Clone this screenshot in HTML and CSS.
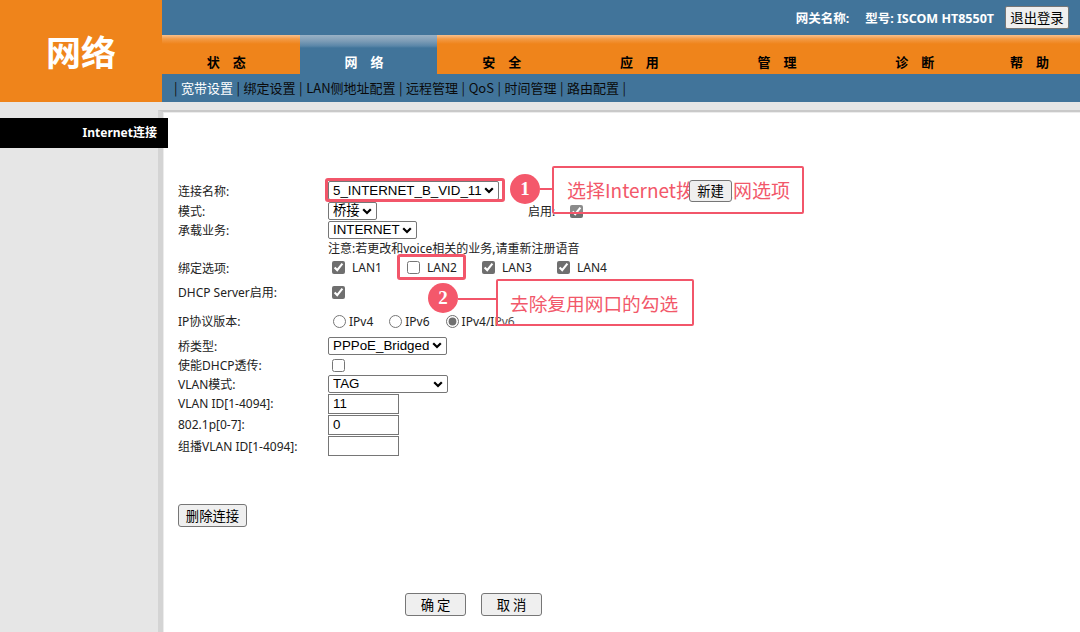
FILE: index.html
```html
<!DOCTYPE html>
<html lang="zh-CN">
<head>
<meta charset="utf-8">
<title>网络</title>
<link rel="stylesheet" href="styles.css">
</head>
<body>
<div class="header">
  <div class="logo">网络</div>
  <div class="head-main">
    <div class="topbar">
      <span class="gw">网关名称:</span>
      <span class="model">型号: ISCOM HT8550T</span>
      <button class="btn logout">退出登录</button>
    </div>
    <div class="tabs">
      <div class="tab">状 态</div>
      <div class="tab active">网 络</div>
      <div class="tab">安 全</div>
      <div class="tab">应 用</div>
      <div class="tab">管 理</div>
      <div class="tab">诊 断</div>
      <div class="tab last">帮 助</div>
    </div>
    <div class="subnav">
      <span class="sep">|</span> <span class="cur">宽带设置</span> <span class="sep">|</span> 绑定设置 <span class="sep">|</span> LAN侧地址配置 <span class="sep">|</span> 远程管理 <span class="sep">|</span> QoS <span class="sep">|</span> 时间管理 <span class="sep">|</span> 路由配置 <span class="sep">|</span>
    </div>
  </div>
</div>

<div class="main">
  <div class="sidebar">
    <div class="side-item">Internet连接</div>
  </div>
  <div class="content">
    <div class="form">
      <div class="row r1">
        <span class="lbl">连接名称:</span>
        <select class="sel w170"><option>5_INTERNET_B_VID_11</option></select>
        <button class="btn btn-new">新建</button>
      </div>
      <div class="row r2">
        <span class="lbl">模式:</span>
        <select class="sel w49"><option>桥接</option></select>
        <span class="enable">启用:</span>
        <input type="checkbox" checked class="cb">
      </div>
      <div class="row r3">
        <span class="lbl">承载业务:</span>
        <select class="sel w89"><option>INTERNET</option></select>
      </div>
      <div class="row r4">
        <span class="lbl"></span>
        <span class="note">注意:若更改和voice相关的业务,请重新注册语音</span>
      </div>
      <div class="row r5">
        <span class="lbl">绑定选项:</span>
        <label class="lan"><input type="checkbox" checked class="cb">LAN1</label>
        <label class="lan"><input type="checkbox" class="cb">LAN2</label>
        <label class="lan"><input type="checkbox" checked class="cb">LAN3</label>
        <label class="lan"><input type="checkbox" checked class="cb">LAN4</label>
      </div>
      <div class="row r6">
        <span class="lbl">DHCP Server启用:</span>
        <input type="checkbox" checked class="cb">
      </div>
      <div class="row r7">
        <span class="lbl">IP协议版本:</span>
        <label class="rad"><input type="radio" name="ipv" class="rb">IPv4</label>
        <label class="rad"><input type="radio" name="ipv" class="rb">IPv6</label>
        <label class="rad"><input type="radio" name="ipv" checked class="rb">IPv4/IPv6</label>
      </div>
      <div class="row r8">
        <span class="lbl">桥类型:</span>
        <select class="sel w119"><option>PPPoE_Bridged</option></select>
      </div>
      <div class="row r9">
        <span class="lbl">使能DHCP透传:</span>
        <input type="checkbox" class="cb">
      </div>
      <div class="row r10">
        <span class="lbl">VLAN模式:</span>
        <select class="sel w120"><option>TAG</option></select>
      </div>
      <div class="row r11">
        <span class="lbl">VLAN ID[1-4094]:</span>
        <input type="text" class="txt" value="11">
      </div>
      <div class="row r12">
        <span class="lbl">802.1p[0-7]:</span>
        <input type="text" class="txt" value="0">
      </div>
      <div class="row r13">
        <span class="lbl">组播VLAN ID[1-4094]:</span>
        <input type="text" class="txt" value="">
      </div>
    </div>
    <div class="del-row"><button class="btn btn-del">删除连接</button></div>
    <div class="actions">
      <button class="btn btn-act">确 定</button>
      <button class="btn btn-act">取 消</button>
    </div>
  </div>
</div>

<div class="annot">
  <div class="hl hl1"></div>
  <div class="hl hl2"></div>
  <div class="num num1">1</div>
  <div class="line line1"></div>
  <div class="callout box1">选择Internet拨号上网选项</div>
  <div class="num num2">2</div>
  <div class="line line2"></div>
  <div class="callout box2">去除复用网口的勾选</div>
</div>
</body>
</html>
```

FILE: styles.css
```css
* { box-sizing: border-box; }

html, body {
  margin: 0;
  padding: 0;
}

body {
  width: 1080px;
  height: 632px;
  overflow: hidden;
  background: #e6e6e6;
  font-family: "Noto Sans", "Noto Sans CJK SC", sans-serif;
  font-size: 12px;
  color: #222;
}

/* ---------- header ---------- */
.header {
  display: flex;
  height: 102px;
}

.logo {
  width: 162px;
  background: #ef841b;
  color: #fff;
  font-family: "Noto Sans CJK SC", sans-serif;
  font-weight: 700;
  font-size: 35px;
  display: flex;
  align-items: center;
  justify-content: center;
  padding-bottom: 2px;
}

.head-main {
  flex: 1;
  display: flex;
  flex-direction: column;
  background: #41749a;
}

.topbar {
  height: 35px;
  display: flex;
  align-items: center;
  justify-content: flex-end;
  padding-right: 11px;
  color: #fff;
  font-family: "Noto Sans", "Noto Sans CJK SC", sans-serif;
  font-weight: 700;
  font-size: 12.5px;
}

.gw { margin-right: 16px; }
.model { margin-right: 11px; }

.tabs {
  height: 39px;
  display: flex;
}

.tab {
  width: 15%;
  background: linear-gradient(to bottom, #f8c08c 0px, #f39a45 4px, #ef841b 9px, #ef841b 100%);
  color: #000;
  font-family: "Noto Sans CJK SC", sans-serif;
  font-weight: 700;
  font-size: 13px;
  line-height: 20px;
  padding-top: 17px;
  padding-right: 9px;
  text-align: center;
  word-spacing: 10px;
}

.tab.active {
  background: linear-gradient(to bottom, #9ab2c6 0px, #7d9cb6 6px, #5a86a8 11px, #41749a 13px, #41749a 100%);
  color: #fff;
}

.tab.last {
  width: auto;
  flex: 1;
}

.subnav {
  height: 28px;
  line-height: 28px;
  padding-left: 12px;
  font-family: "Noto Sans CJK SC", sans-serif;
  font-size: 13px;
  color: #0a0a0a;
  white-space: nowrap;
  word-spacing: 0.6px;
}

.subnav .cur { color: #fff; }
.subnav .sep { color: #111; }

/* ---------- main ---------- */
.main {
  display: flex;
  height: 530px;
}

.sidebar {
  width: 158px;
  padding-top: 16px;
}

.side-item {
  position: relative;
  z-index: 1;
  width: 168px;
  height: 30px;
  background: #000;
  color: #fff;
  font-family: "Noto Sans", "Noto Sans CJK SC", sans-serif;
  font-weight: 700;
  font-size: 12px;
  line-height: 30px;
  text-align: right;
  padding-right: 11px;
}

.content {
  flex: 1;
  margin-top: 8px;
  background: #fff;
  border-top: 2px solid #c9c9c9;
  border-left: 5px solid #d4d4d4;
  box-shadow: inset 1px 1px 0 #ececec;
  padding: 68px 0 0 15px;
}

/* ---------- form ---------- */
.form {
  display: flex;
  flex-direction: column;
}

.row {
  display: flex;
  align-items: center;
  white-space: nowrap;
}

.r1 { height: 21px; }
.r2 { height: 20px; }
.r3 { height: 18px; }
.r4 { height: 18px; }
.r5 { height: 21px; }
.r6 { height: 28px; }
.r7 { height: 30px; }
.r8 { height: 19px; }
.r9 { height: 20px; }
.r10 { height: 18px; }
.r11 { height: 21px; }
.r12 { height: 21px; }
.r13 { height: 21px; }

.lbl {
  width: 150px;
  flex: none;
  font-family: "Noto Sans", "Noto Sans CJK SC", sans-serif;
  font-size: 12px;
  color: #222;
}

.sel {
  appearance: none;
  -webkit-appearance: none;
  height: 18px;
  padding: 0 16px 0 4px;
  border: 1px solid #767676;
  border-radius: 2px;
  background-color: #fff;
  background-image: url("data:image/svg+xml;utf8,<svg xmlns='http://www.w3.org/2000/svg' width='10' height='7'><path d='M1.2 1.2 L5 5 L8.8 1.2' fill='none' stroke='black' stroke-width='2.2'/></svg>");
  background-repeat: no-repeat;
  background-position: right 4px center;
  color: #000;
  font-family: "Liberation Sans", "Noto Sans CJK SC", sans-serif;
  font-size: 13.33px;
  line-height: 16px;
}

.w170 { width: 171px; height: 19px; }
.w49 { width: 49px; }
.w89 { width: 89px; }
.w119 { width: 119px; }
.w120 { width: 120px; }

.btn {
  appearance: none;
  -webkit-appearance: none;
  border: 1px solid #767676;
  border-radius: 3px;
  background: #efefef;
  color: #000;
  font-family: "Noto Sans CJK SC", sans-serif;
  font-size: 13.33px;
  padding: 0;
  line-height: 1;
}

.btn-new {
  position: relative;
  z-index: 5;
  width: 43px;
  height: 22px;
  margin-left: 190px;
}

.logout {
  width: 64px;
  height: 23px;
  font-weight: 400;
  border-radius: 2px;
}

.enable {
  margin-left: 151px;
  margin-right: 11px;
  color: #222;
}

.cb {
  margin: 3px 3px 3px 4px;
  width: 13px;
  height: 13px;
  accent-color: #6f6f6f;
}

.note {
  font-family: "Noto Sans", "Noto Sans CJK SC", sans-serif;
  font-size: 12px;
  color: #222;
}

.lan {
  width: 75px;
  display: flex;
  align-items: center;
  color: #222;
}

.lan .cb { margin-right: 7px; }

.rad {
  display: flex;
  align-items: center;
  margin-right: 11px;
  color: #222;
}

.rb {
  margin: 0 3px 0 5px;
  width: 13px;
  height: 13px;
  accent-color: #6f6f6f;
}

.txt {
  width: 71px;
  height: 20px;
  border: 1px solid #767676;
  border-radius: 0;
  padding: 0 4px;
  font-family: "Liberation Sans", sans-serif;
  font-size: 13.33px;
  color: #000;
  background: #fff;
}

.del-row {
  margin-top: 48px;
}

.btn-del {
  width: 69px;
  height: 23px;
}

.actions {
  margin-top: 66px;
  padding-left: 227px;
  display: flex;
  gap: 15px;
}

.btn-act {
  width: 61px;
  height: 23px;
}

/* ---------- annotations ---------- */
.annot {
  position: absolute;
  left: 0;
  top: 0;
  z-index: 2;
}

.hl {
  position: absolute;
  border: 3px solid #f2566a;
  border-radius: 3px;
}

.hl1 { left: 325px; top: 178px; width: 180px; height: 24px; }
.hl2 { left: 397px; top: 254px; width: 69px; height: 26px; }

.num {
  position: absolute;
  width: 30px;
  height: 30px;
  border-radius: 50%;
  background: #f4586b;
  color: #fff;
  font-family: "Liberation Serif", serif;
  font-weight: 700;
  font-size: 19px;
  line-height: 30px;
  text-align: center;
}

.num1 { left: 510px; top: 174px; }
.num2 { left: 428px; top: 283px; }

.line {
  position: absolute;
  height: 2px;
  background: #f2566a;
}

.line1 { left: 540px; top: 188px; width: 13px; }
.line2 { left: 458px; top: 298px; width: 39px; }

.callout {
  position: absolute;
  border: 2px solid #f2566a;
  border-radius: 2px;
  background: rgba(255, 255, 255, 0.2);
  color: #f2586a;
  font-family: "Noto Sans CJK SC", sans-serif;
  font-size: 19px;
  line-height: 22px;
  display: flex;
  align-items: center;
  white-space: nowrap;
}

.box1 { left: 552px; top: 166px; width: 252px; height: 48px; padding-left: 13px; }
.box2 { left: 496px; top: 279px; width: 198px; height: 47px; padding-left: 12px; font-size: 18.7px; }
```
